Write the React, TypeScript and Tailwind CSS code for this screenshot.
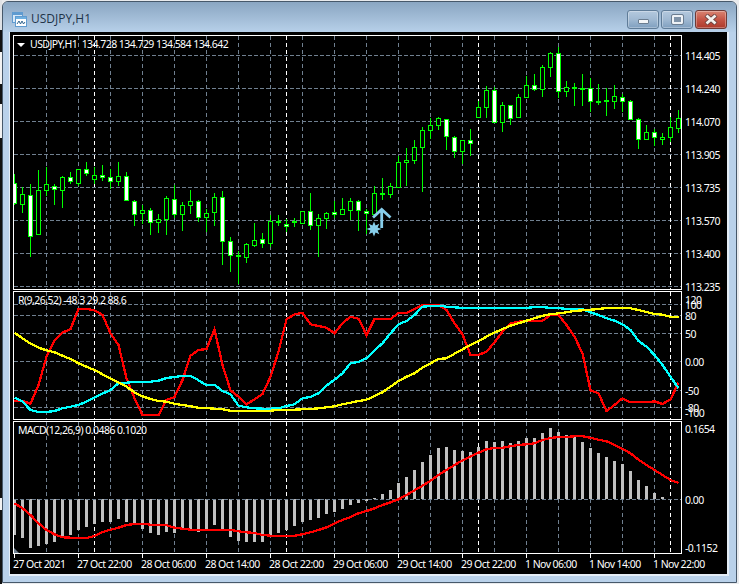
const font = "font-['Noto_Sans',sans-serif]";

// [high, low, bodyTop, bodyBottom, filled] page pixels, one candle every 8px starting at x=14
const candles: [number, number, number, number, number][] = [
  [174, 205, 183, 203, 1], [187, 213, 194, 204, 0], [184, 257, 195, 236, 1], [170, 234, 190, 234, 0],
  [167, 196, 184, 190, 0], [184, 205, 186, 189, 1], [176, 208, 177, 190, 0], [172, 184, 177, 181, 1],
  [169, 186, 169, 183, 0], [162, 176, 169, 173, 1], [167, 184, 175, 179, 0], [165, 181, 175, 177, 1],
  [169, 189, 177, 181, 1], [162, 186, 176, 181, 0], [172, 201, 176, 200, 1], [200, 226, 201, 214, 1],
  [205, 224, 210, 213, 0], [208, 235, 210, 222, 1], [214, 233, 219, 222, 0], [196, 235, 198, 219, 0],
  [185, 218, 199, 214, 1], [202, 231, 205, 214, 0], [190, 214, 201, 205, 0], [200, 222, 201, 217, 1],
  [209, 232, 213, 217, 0], [193, 226, 197, 212, 0], [191, 265, 197, 241, 1], [237, 272, 241, 255, 1],
  [251, 284, 255, 256, 1], [243, 263, 244, 257, 0], [223, 247, 240, 245, 0], [233, 248, 239, 243, 1],
  [215, 247, 221, 243, 0], [215, 226, 221, 222, 1], [219, 232, 224, 226, 1], [218, 227, 221, 222, 1],
  [211, 223, 211, 223, 0], [193, 230, 211, 225, 1], [214, 257, 218, 225, 0], [212, 229, 213, 218, 0],
  [201, 218, 212, 214, 1], [198, 215, 209, 214, 0], [198, 220, 201, 210, 0], [200, 231, 201, 210, 1],
  [209, 234, 211, 213, 1], [186, 215, 193, 214, 0], [178, 200, 193, 194, 1], [183, 198, 186, 194, 0],
  [156, 187, 162, 187, 0], [148, 186, 160, 162, 0], [140, 164, 147, 160, 0], [127, 192, 130, 147, 0],
  [118, 139, 125, 130, 0], [117, 130, 118, 125, 0], [119, 150, 119, 136, 1], [136, 158, 137, 151, 1],
  [140, 164, 140, 151, 0], [129, 156, 140, 143, 1], [101, 117, 107, 117, 0], [86, 118, 90, 107, 0],
  [87, 123, 90, 122, 1], [102, 132, 105, 122, 0], [105, 125, 105, 118, 1], [94, 117, 97, 117, 0],
  [76, 97, 85, 97, 0], [74, 91, 85, 89, 1], [65, 97, 67, 89, 0], [52, 77, 53, 67, 0],
  [47, 98, 53, 91, 1], [81, 97, 87, 91, 0], [83, 106, 87, 88, 1], [74, 106, 88, 89, 1],
  [78, 112, 88, 101, 1], [84, 105, 101, 102, 1], [88, 116, 100, 101, 1], [85, 109, 96, 101, 0],
  [94, 112, 97, 101, 1], [100, 120, 101, 119, 1], [118, 149, 119, 139, 1], [125, 139, 132, 139, 0],
  [129, 146, 132, 137, 1], [133, 145, 137, 139, 0], [117, 142, 127, 137, 0], [110, 133, 118, 128, 0],
];

// indicator values as read off the 3x crops of the reference
const rsiRed = [347, 348, 356, 300, 215, 167, 143, 132, 72, 72, 76, 90, 145, 180, 280, 340, 390, 390, 390, 345, 336, 285, 212, 195, 192, 133, 240, 316, 335, 358, 343, 327, 275, 200, 103, 88, 84, 118, 123, 128, 145, 115, 95, 101, 150, 102, 102, 102, 84, 84, 72, 60, 60, 60, 75, 115, 148, 210, 210, 200, 172, 140, 115, 110, 107, 107, 107, 90, 90, 120, 155, 205, 316, 325, 378, 360, 340, 352, 352, 352, 349, 357, 343, 293];
const rsiCyan = [338, 350, 375, 381, 381, 378, 370, 365, 360, 350, 338, 326, 315, 295, 293, 291, 291, 290, 287, 279, 276, 272, 272, 286, 301, 299, 318, 328, 362, 367, 370, 371, 371, 370, 363, 358, 340, 336, 325, 302, 284, 265, 235, 231, 220, 196, 175, 145, 118, 108, 90, 65, 63, 62, 65, 67, 69, 69, 69, 69, 69, 69, 69, 69, 69, 66, 66, 69, 69, 72, 72, 73, 82, 90, 100, 107, 118, 135, 168, 185, 210, 240, 275, 310];
const rsiYellow = [143, 160, 176, 188, 196, 202, 212, 222, 235, 245, 255, 268, 280, 292, 305, 322, 334, 342, 348, 350, 356, 360, 364, 368, 369, 371, 373, 377, 377, 377, 377, 377, 377, 375, 374, 374, 373, 372, 370, 367, 364, 358, 353, 348, 344, 333, 322, 305, 288, 275, 265, 248, 235, 222, 220, 206, 193, 180, 168, 155, 143, 132, 122, 115, 107, 100, 92, 88, 85, 82, 78, 76, 74, 72, 69, 68, 68, 70, 75, 81, 87, 89, 95, 95];
const macdBars = [360, 368, 398, 392, 386, 380, 365, 360, 345, 336, 327, 321, 320, 311, 321, 325, 342, 353, 360, 350, 355, 346, 343, 350, 345, 330, 345, 365, 378, 381, 381, 380, 362, 354, 345, 333, 321, 315, 309, 297, 291, 282, 270, 264, 258, 250, 237, 225, 204, 186, 165, 141, 120, 99, 96, 105, 108, 111, 96, 78, 81, 78, 84, 78, 69, 69, 54, 39, 51, 60, 63, 81, 99, 114, 126, 138, 147, 168, 195, 213, 234, 246, 252, 253];
const macdSignal = [265, 280, 300, 325, 345, 358, 367, 368, 369, 369, 363, 351, 344, 338, 330, 327, 326, 329, 330, 331, 338, 341, 344, 344, 344, 344, 344, 345, 349, 352, 354, 360, 362, 362, 363, 362, 358, 352, 345, 337, 325, 315, 306, 295, 288, 280, 270, 262, 253, 240, 226, 212, 197, 180, 165, 150, 136, 125, 113, 103, 99, 98, 94, 90, 88, 85, 75, 69, 66, 66, 64, 64, 68, 74, 79, 90, 102, 115, 134, 150, 165, 180, 195, 204];

const grayX = Array.from({ length: 20 }, (_, i) => 46 + i * 32);
const whiteX = [94, 286, 478, 670];

const priceLabels = [
  ["114.405", 55], ["114.240", 88], ["114.070", 121], ["113.905", 154],
  ["113.735", 187], ["113.570", 220], ["113.400", 253], ["113.235", 286],
] as const;
const rsiLabels = [
  ["120", 299], ["100", 304], ["80", 315], ["50", 333], ["0.00", 361], ["-50", 390], ["-80", 407], ["-100", 412],
] as const;
const macdLabels = [["0.1654", 428], ["0.00", 499], ["-0.1152", 547]] as const;
const timeLabels = [
  "27 Oct 2021", "27 Oct 22:00", "28 Oct 06:00", "28 Oct 14:00", "28 Oct 22:00", "29 Oct 06:00",
  "29 Oct 14:00", "29 Oct 22:00", "1 Nov 06:00", "1 Nov 14:00", "1 Nov 22:00",
];

const toPoints = (values: number[], base: number) =>
  values.map((v, i) => `${14.5 + i * 8},${(base + v / 3).toFixed(1)}`).join(" ");

function Grid({ top, bottom, rows }: { top: number; bottom: number; rows: number[] }) {
  return (
    <g strokeWidth="1" shapeRendering="crispEdges" fill="none">
      {rows.map((y) => (
        <line key={y} x1="14" x2="681" y1={y + 0.5} y2={y + 0.5} stroke="#708090" strokeDasharray="4 2" />
      ))}
      {grayX.map((x) => (
        <line key={x} x1={x + 0.5} x2={x + 0.5} y1={top} y2={bottom} stroke="#708090" strokeDasharray="4 3" />
      ))}
      {whiteX.map((x) => (
        <line key={x} x1={x + 0.5} x2={x + 0.5} y1={top} y2={bottom} stroke="#ffffff" strokeDasharray="4 3" />
      ))}
    </g>
  );
}

function Pane({
  top,
  height,
  legend,
  labels,
  children,
}: {
  top: number;
  height: number;
  legend: React.ReactNode;
  labels: readonly (readonly [string, number])[];
  children: React.ReactNode;
}) {
  return (
    <div className="flex w-full" style={{ height }}>
      <div className="relative w-[669px] border border-white overflow-hidden">
        <svg
          className="absolute inset-0 block"
          width="667"
          height={height - 2}
          viewBox={`14 ${top + 1} 667 ${height - 2}`}
        >
          {children}
        </svg>
        <div className="absolute left-[4px] top-[2px] text-white whitespace-pre leading-[13px]">{legend}</div>
      </div>
      <div className="relative flex-1">
        {labels.map(([text, y]) => (
          <div key={text} className="absolute left-0 flex items-center -translate-y-1/2" style={{ top: y - top + 0.5 }}>
            <span className="text-white leading-[11px] pl-[3px]">{text}</span>
          </div>
        ))}
      </div>
    </div>
  );
}

function TitleButton({ className, children }: { className: string; children: React.ReactNode }) {
  return (
    <div
      className={`flex items-center justify-center h-[19px] w-[32px] rounded-[3px] border border-[#5f7c98] shadow-[inset_0_0_0_1px_rgba(255,255,255,0.3)] ${className}`}
    >
      {children}
    </div>
  );
}

function WindowIcon() {
  return (
    <svg width="15" height="15" viewBox="0 0 15 15" className="shrink-0">
      <rect x="0.5" y="0.5" width="10" height="10" fill="#d6e8f7" stroke="#5f9bd0" />
      <rect x="1" y="1" width="9" height="2" fill="#5f9bd0" />
      <rect x="3.5" y="4.5" width="11" height="10" fill="#ffffff" stroke="#5f9bd0" />
      <rect x="4" y="5" width="10" height="2" fill="#6fb0e0" />
      <path d="M5 12 L7 9 L8.5 12 L10 9 L11.5 12 L13 10" fill="none" stroke="#33668f" strokeWidth="1" />
    </svg>
  );
}

// sliver of the windows behind this one, along the left edge
const behindBlocks = [
  [0, 30, "#dfe2e6"], [30, 22, "#111111"], [52, 32, "#f2f2f2"], [84, 20, "#111111"], [104, 34, "#f2f2f2"],
  [138, 360, "#111111"], [498, 12, "#f2f2f2"], [510, 74, "#111111"],
] as const;

export default function App() {
  return (
    <div className={`relative w-[739px] h-[584px] overflow-hidden bg-[#e8eaed] text-[10.5px] tracking-[-0.55px] ${font}`}>
      <div className="absolute left-0 top-0 w-[2px]">
        {behindBlocks.map(([y, h, color]) => (
          <div key={y} style={{ height: h, backgroundColor: color }} />
        ))}
      </div>
      <div className="ml-[2px] mt-[1px] w-[735px] h-[582px] flex flex-col rounded-t-[6px] border border-[#46586a] bg-[#b9d1ea]">
        {/* TITLE BAR */}
        <div className="flex h-[30px] shrink-0 items-start justify-between rounded-t-[5px] bg-gradient-to-b from-[#8aa6c2] to-[#b7d0e9] pl-[9px] pr-[9px]">
          <div className="flex items-center gap-[4px] pt-[9px]">
            <WindowIcon />
            <span className="font-['Open_Sans',sans-serif] text-[12px] tracking-normal leading-[16px] text-[#1f3348]">USDJPY,H1</span>
          </div>
          <div className="flex gap-[2px] pt-[8px]">
            <TitleButton className="bg-gradient-to-b from-[#b4c9de] via-[#a0b9d2] to-[#7f9fbf]">
              <div className="mt-[3px] h-[5px] w-[11px] rounded-[1px] border border-[#6b7d90] bg-[#f4f6f8]" />
            </TitleButton>
            <TitleButton className="bg-gradient-to-b from-[#b4c9de] via-[#a0b9d2] to-[#7f9fbf]">
              <div className="h-[9px] w-[11px] rounded-[1px] border-2 border-[#eef2f6] outline outline-1 outline-[#6b7d90] bg-[#7f93a8]" />
            </TitleButton>
            <TitleButton className="bg-gradient-to-b from-[#d98472] via-[#c55546] to-[#ad3a2c] border-[#6e3a36]">
              <svg width="14" height="11" viewBox="0 0 14 11">
                <path d="M2 1 L12 10 M12 1 L2 10" stroke="#6b4442" strokeWidth="4.4" />
                <path d="M2.5 1.5 L11.5 9.5 M11.5 1.5 L2.5 9.5" stroke="#f4f1ee" strokeWidth="2.8" />
              </svg>
            </TitleButton>
          </div>
        </div>

        {/* CHART CLIENT AREA */}
        <div className="ml-[6px] w-[720px] h-[544px] border-l border-r-2 border-b-2 border-[#e4edf6]">
          <div className="flex h-full flex-col gap-[1px] bg-black pl-[3px] pt-[3px]">
            <Pane
              top={35}
              height={255}
              labels={priceLabels}
              legend={
                <span className="flex items-center">
                  <span className="mr-[5px] ml-[-1px] h-0 w-0 border-x-[4px] border-t-[4px] border-x-transparent border-t-white" />
                  {"USDJPY,H1  134.728 134.729 134.584 134.642"}
                </span>
              }
            >
              <Grid top={36} bottom={289} rows={priceLabels.map((l) => l[1])} />
              <g shapeRendering="crispEdges">
                {candles.map(([high, low, top, bottom, filled], i) => {
                  const x = 14 + i * 8;
                  return (
                    <g key={i}>
                      <rect x={x} y={high} width="1" height={low - high} fill="#00ff00" />
                      <rect x={x - 2} y={top} width="5" height={bottom - top + 1} fill="#00ff00" />
                      {bottom - top > 1 && (
                        <rect x={x - 1} y={top + 1} width="3" height={bottom - top - 1} fill={filled ? "#ffffff" : "#000000"} />
                      )}
                    </g>
                  );
                })}
              </g>
              <path d="M373 217.5 L381.7 209.5 L390.5 217.5 M381.7 210 V228" fill="none" stroke="#87ceeb" strokeWidth="2.8" />
              <polygon
                points="374,221.5 375.6,225.4 379.3,223.7 377.6,227.4 381.5,229 377.6,230.6 379.3,234.3 375.6,232.6 374,236.5 372.4,232.6 368.7,234.3 370.4,230.6 366.5,229 370.4,227.4 368.7,223.7 372.4,225.4"
                fill="#87ceeb"
              />
            </Pane>

            <Pane
              top={291}
              height={129}
              labels={rsiLabels}
              legend={"R(9,26,52) -48.3 29.2 88.6"}
            >
              <Grid top={292} bottom={419} rows={[304, 315, 333, 361, 390, 407]} />
              <g fill="none" strokeWidth="2.3" shapeRendering="crispEdges">
                <polyline points={toPoints(rsiRed, 285)} stroke="#ff0000" />
                <polyline points={toPoints(rsiCyan, 285)} stroke="#00ffff" />
                <polyline points={toPoints(rsiYellow, 285)} stroke="#ffff00" />
              </g>
            </Pane>

            <Pane
              top={421}
              height={133}
              labels={macdLabels}
              legend={"MACD(12,26,9) 0.0486 0.1020"}
            >
              <Grid top={422} bottom={553} rows={[]} />
              <g shapeRendering="crispEdges" fill="#c0c0c0">
                {macdBars.map((v, i) => {
                  const y = 415 + v / 3;
                  return <rect key={i} x={13 + i * 8} y={Math.min(y, 499)} width="3" height={Math.abs(y - 499)} />;
                })}
              </g>
              <line x1="14" x2="681" y1="499.5" y2="499.5" stroke="#708090" strokeDasharray="4 2" shapeRendering="crispEdges" />
              <polyline points={toPoints(macdSignal, 415)} fill="none" stroke="#ff0000" strokeWidth="2.3" shapeRendering="crispEdges" />
              <polygon points="14,548 14,553 19,553" fill="#708090" />
            </Pane>

            {/* TIME AXIS */}
            <div className="grid grid-cols-[repeat(11,64px)] text-white">
              {timeLabels.map((t) => (
                <div key={t} className="relative pt-[2px] leading-[13px] whitespace-nowrap">
                  <span className="absolute left-[1px] top-[-1px] h-[4px] w-px bg-white" />
                  <span className="block pt-[1px]">{t}</span>
                </div>
              ))}
            </div>
          </div>
        </div>
      </div>
    </div>
  );
}
